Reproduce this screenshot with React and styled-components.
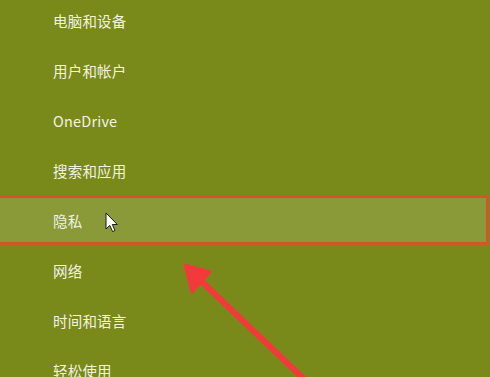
import React from 'react';
import styled, { createGlobalStyle } from 'styled-components';

const GlobalStyle = createGlobalStyle`
  html, body {
    margin: 0;
    padding: 0;
    background-color: #7a8a1a;
    overflow: hidden;
  }
`;

const Screen = styled.div`
  position: relative;
  width: 490px;
  height: 377px;
  overflow: hidden;
  background-color: #7a8a1a;
  font-family: "Noto Sans CJK SC", "Noto Sans", sans-serif;
`;

const Menu = styled.ul`
  list-style: none;
  margin: -5px 0 0 0;
  padding: 0;
`;

const Item = styled.li`
  display: flex;
  align-items: center;
  height: 50px;
  box-sizing: border-box;
  padding-left: 53px;
  color: #f2f2e4;
  font-size: 14.5px;
  letter-spacing: 0.2px;
  background-color: ${(p) => (p.$active ? '#8a9a38' : 'transparent')};
  border: ${(p) => (p.$active ? '3px solid #d4552a' : 'none')};
  border-left: none;
  margin-right: ${(p) => (p.$active ? '1px' : '0')};
`;

const Label = styled.span`
  position: relative;
  top: ${(p) => (p.$active ? '0' : '0')};
`;

const Cursor = styled.svg`
  position: absolute;
  left: 105px;
  top: 212px;
`;

const Arrow = styled.svg`
  position: absolute;
  left: 0;
  top: 0;
  pointer-events: none;
`;

const items = [
  '电脑和设备',
  '用户和帐户',
  'OneDrive',
  '搜索和应用',
  '隐私',
  '网络',
  '时间和语言',
  '轻松使用',
];

export default function App() {
  return (
    <Screen>
      <GlobalStyle />
      <Menu>
        {items.map((t) => (
          <Item key={t} $active={t === '隐私'}>
            <Label>{t}</Label>
          </Item>
        ))}
      </Menu>
      <Cursor width="14" height="22" viewBox="0 0 14 22">
        <path
          d="M1 1 L1 17 L4.8 13.4 L7.6 19.6 L10 18.5 L7.3 12.5 L12.3 12.5 Z"
          fill="#ffffff"
          stroke="#1a1a1a"
          strokeWidth="1"
          strokeLinejoin="round"
        />
      </Cursor>
      <Arrow width="490" height="377" viewBox="0 0 490 377">
        <line x1="305" y1="380" x2="198" y2="278" stroke="#f23a3a" strokeWidth="6" strokeLinecap="round" />
        <polygon points="185,265 210,272 192,292" fill="#f23a3a" stroke="#f23a3a" strokeWidth="3" strokeLinejoin="round" />
      </Arrow>
    </Screen>
  );
}
